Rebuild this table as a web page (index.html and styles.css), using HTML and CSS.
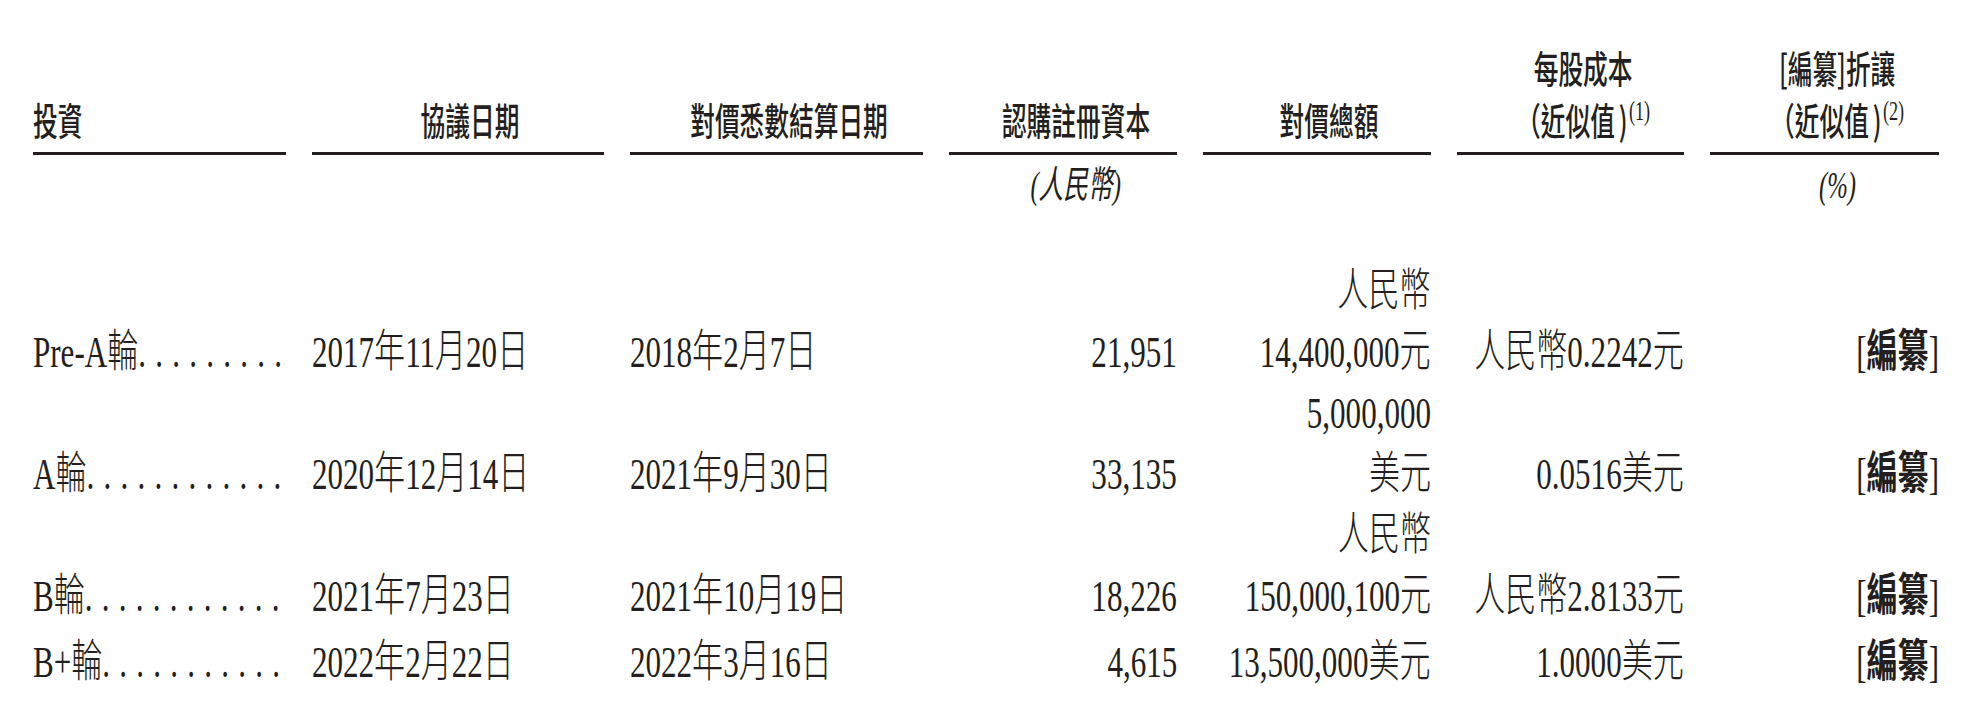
FILE: index.html
```html
<!DOCTYPE html>
<html lang="zh-Hant">
<head>
<meta charset="utf-8">
<title>投資</title>
<link rel="stylesheet" href="styles.css">
</head>
<body>
<div class="tbl">
  <div class="row head">
    <div class="c l"><span>投資</span></div>
    <div class="c m"><span>協議日期</span></div>
    <div class="c m"><span>對價悉數結算日期</span></div>
    <div class="c m"><span>認購註冊資本</span></div>
    <div class="c m"><span>對價總額</span></div>
    <div class="c m"><span>每股成本<br>（近似值<span class="cp">)</span><span class="fn">(1)</span></span></div>
    <div class="c m"><span>[編纂]折讓<br>（近似值<span class="cp">)</span><span class="fn">(2)</span></span></div>
  </div>
  <div class="row units">
    <div></div><div></div><div></div>
    <div class="c m"><span>(人民幣)</span></div>
    <div></div><div></div>
    <div class="c m"><span>(%)</span></div>
  </div>
  <div class="row data two">
    <div class="c l"><span>Pre-A輪<span class="dots">.........</span></span></div>
    <div class="c l"><span>2017年11月20日</span></div>
    <div class="c l"><span>2018年2月7日</span></div>
    <div class="c r"><span>21,951</span></div>
    <div class="c r"><span>人民幣<br>14,400,000元</span></div>
    <div class="c r"><span>人民幣0.2242元</span></div>
    <div class="c r"><span>[<span class="b">編纂</span>]</span></div>
  </div>
  <div class="row data two">
    <div class="c l"><span>A輪<span class="dots">............</span></span></div>
    <div class="c l"><span>2020年12月14日</span></div>
    <div class="c l"><span>2021年9月30日</span></div>
    <div class="c r"><span>33,135</span></div>
    <div class="c r"><span>5,000,000<br>美元</span></div>
    <div class="c r"><span>0.0516美元</span></div>
    <div class="c r"><span>[<span class="b">編纂</span>]</span></div>
  </div>
  <div class="row data two">
    <div class="c l"><span>B輪<span class="dots">............</span></span></div>
    <div class="c l"><span>2021年7月23日</span></div>
    <div class="c l"><span>2021年10月19日</span></div>
    <div class="c r"><span>18,226</span></div>
    <div class="c r"><span>人民幣<br>150,000,100元</span></div>
    <div class="c r"><span>人民幣2.8133元</span></div>
    <div class="c r"><span>[<span class="b">編纂</span>]</span></div>
  </div>
  <div class="row data one">
    <div class="c l"><span>B+輪<span class="dots">...........</span></span></div>
    <div class="c l"><span>2022年2月22日</span></div>
    <div class="c l"><span>2022年3月16日</span></div>
    <div class="c r"><span>4,615</span></div>
    <div class="c r"><span>13,500,000美元</span></div>
    <div class="c r"><span>1.0000美元</span></div>
    <div class="c r"><span>[<span class="b">編纂</span>]</span></div>
  </div>
</div>
</body>
</html>
```
FILE: styles.css
```css
body {
  margin: 0;
  background: #ffffff;
  color: #231f20;
}
.tbl {
  padding: 41px 0 0 33px;
}
.row {
  display: grid;
  grid-template-columns: 253px 292px 293px 228px 228px 227px 229px;
  column-gap: 26px;
  align-items: end;
}
.c {
  display: flex;
  min-width: 0;
}
.c > span {
  flex-shrink: 0;
  display: inline-block;
  white-space: nowrap;
}
.l { justify-content: flex-start; }
.l > span { transform-origin: left center; text-align: left; }
.r { justify-content: flex-end; }
.r > span { transform-origin: right center; text-align: right; }
.m { justify-content: center; padding-left: 25px; }
.m > span { transform-origin: center center; text-align: center; }

.head .c {
  border-bottom: 3px solid #231f20;
  padding-bottom: 7px;
  font: 500 38px/52px "Noto Sans CJK TC", sans-serif;
}
.head .c > span { transform: scaleX(0.65); }
.cp {
  margin-left: 6px;
}
.fn {
  font: 28px/1 "Liberation Serif", serif;
  vertical-align: 15px;
  margin-left: 2px;
}

.units {
  height: 106px;
  align-items: start;
}
.units .c {
  padding-top: 5px;
  font: italic 38px/51px "Liberation Serif", "Noto Sans CJK TC", serif;
}
.units .c > span { transform: scaleX(0.65); }

.data .c {
  font: 300 45px/61px "Liberation Serif", "Noto Sans CJK TC", serif;
}
.data .c > span { transform: scaleX(0.69); }
.two { height: 122px; }
.one { height: 61px; }
.dots { letter-spacing: 13.4px; }
.b {
  font-family: "Noto Sans CJK TC", sans-serif;
  font-weight: 700;
}
```
